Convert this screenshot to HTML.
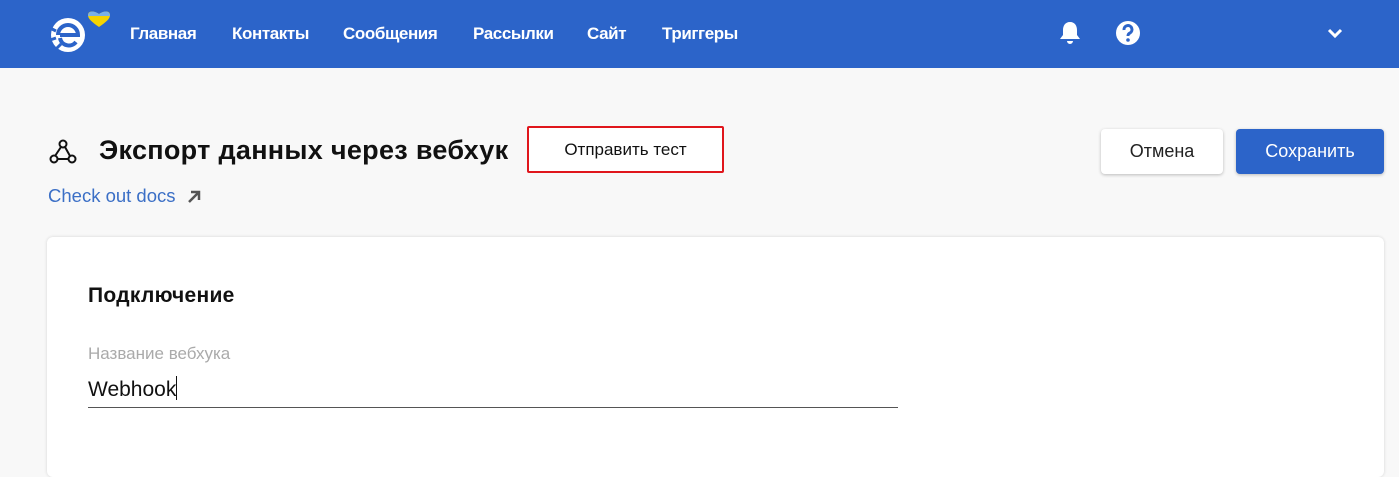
<!DOCTYPE html>
<html><head><meta charset="utf-8"><style>
*{margin:0;padding:0;box-sizing:border-box}
body{width:1399px;height:461px;overflow:hidden;background:#f8f8f8;font-family:"Liberation Sans","Noto Sans CJK SC",sans-serif;position:relative}
.hdr{position:absolute;left:0;top:0;width:1399px;height:68px;background:#2c64c9}
.nav{position:absolute;top:24px;color:#fff;font-size:17px;font-weight:bold;letter-spacing:-0.4px}
.abs{position:absolute}
h1{position:absolute;left:99px;top:135px;font-size:27px;font-weight:bold;color:#111;letter-spacing:0.3px}
.btn{position:absolute;font-size:18px;display:flex;align-items:center;justify-content:center;border-radius:4px}
.card{position:absolute;left:47px;top:237px;width:1337px;height:240px;background:#fff;border-radius:6px;box-shadow:0 0 3px rgba(0,0,0,.15)}
</style></head><body>
<div class="hdr">
<svg class="abs" style="left:44px;top:8px" width="68" height="50" viewBox="0 0 68 50">
<circle cx="24" cy="27" r="17" fill="#fff"/>
<path d="M14 27 a10 10 0 1 1 20 0 H16" fill="none" stroke="#2c64c9" stroke-width="4"/>
<path d="M16 30 a9 9 0 0 0 16 4" fill="none" stroke="#2c64c9" stroke-width="4"/>
<path d="M6 20 l6 3 M6 32 l6 -2 M12 41 l5 -5" stroke="#2c64c9" stroke-width="3"/>
<path d="M55 19 C48 14 44 11 44 7 C44 3 49 2 55 6 C61 2 66 3 66 7 C66 11 62 14 55 19Z" fill="#f5d300"/>
<path d="M44 8 C44 3 49 2 55 6 C61 2 66 3 66 8Z" fill="#7ab0e8"/>
</svg>
<div class="nav" style="left:130px">Главная</div>
<div class="nav" style="left:232px">Контакты</div>
<div class="nav" style="left:343px">Сообщения</div>
<div class="nav" style="left:473px">Рассылки</div>
<div class="nav" style="left:587px">Сайт</div>
<div class="nav" style="left:662px">Триггеры</div>
<svg class="abs" style="left:1058px;top:20px" width="24" height="26" viewBox="0 0 24 26"><path d="M12 2 C7 2 5 6 5 10 V15 L2 19 H22 L19 15 V10 C19 6 17 2 12 2Z M9 21 a3 3 0 0 0 6 0Z" fill="#fff"/></svg>
<svg class="abs" style="left:1115px;top:20px" width="26" height="26" viewBox="0 0 26 26"><circle cx="13" cy="13" r="12" fill="#fff"/><path d="M9 10 a4 4 0 1 1 6 3 c-2 1 -2 2 -2 3" fill="none" stroke="#2c64c9" stroke-width="3"/><circle cx="13" cy="20" r="1.8" fill="#2c64c9"/></svg>
<svg class="abs" style="left:1327px;top:27px" width="16" height="12" viewBox="0 0 16 12"><path d="M2 3 L8 9 L14 3" fill="none" stroke="#fff" stroke-width="3"/></svg>
</div>
<svg class="abs" style="left:48px;top:138px" width="30" height="28" viewBox="0 0 30 28"><g fill="none" stroke="#111" stroke-width="2"><circle cx="15" cy="6" r="3.5"/><circle cx="6" cy="21" r="3.5"/><circle cx="24" cy="21" r="3.5"/><path d="M13 9 L7 18 M17 9 L22 18 M9 21 H20"/></g></svg>
<h1>Экспорт данных через вебхук</h1>
<div class="btn" style="left:527px;top:126px;width:197px;height:47px;border:2px solid #e0161c;background:#fff;color:#111;border-radius:2px;font-size:17px">Отправить тест</div>
<div class="btn" style="left:1101px;top:129px;width:122px;height:45px;background:#fff;color:#222;box-shadow:0 1px 3px rgba(0,0,0,.25)">Отмена</div>
<div class="btn" style="left:1236px;top:129px;width:148px;height:45px;background:#2c64c9;color:#fff;box-shadow:0 1px 3px rgba(0,0,0,.25)">Сохранить</div>
<div class="abs" style="left:48px;top:185px;font-size:18.5px;color:#3b6fc6">Check out docs</div>
<svg class="abs" style="left:186px;top:189px" width="16" height="16" viewBox="0 0 16 16"><path d="M3 13 L12 4 M5 3 H13 V11" fill="none" stroke="#555" stroke-width="2.5"/></svg>
<div class="card">
<div class="abs" style="left:41px;top:47px;font-size:21px;font-weight:bold;color:#111;letter-spacing:0.3px">Подключение</div>
<div class="abs" style="left:41px;top:107px;font-size:17px;color:#aaa">Название вебхука</div>
<div class="abs" style="left:41px;top:139px;font-size:21px;color:#111">Webhook<span style="display:inline-block;width:1px;height:24px;background:#111;vertical-align:-4px"></span></div>
<div class="abs" style="left:41px;top:170px;width:810px;height:1px;background:#555"></div>
</div>
</body></html>
